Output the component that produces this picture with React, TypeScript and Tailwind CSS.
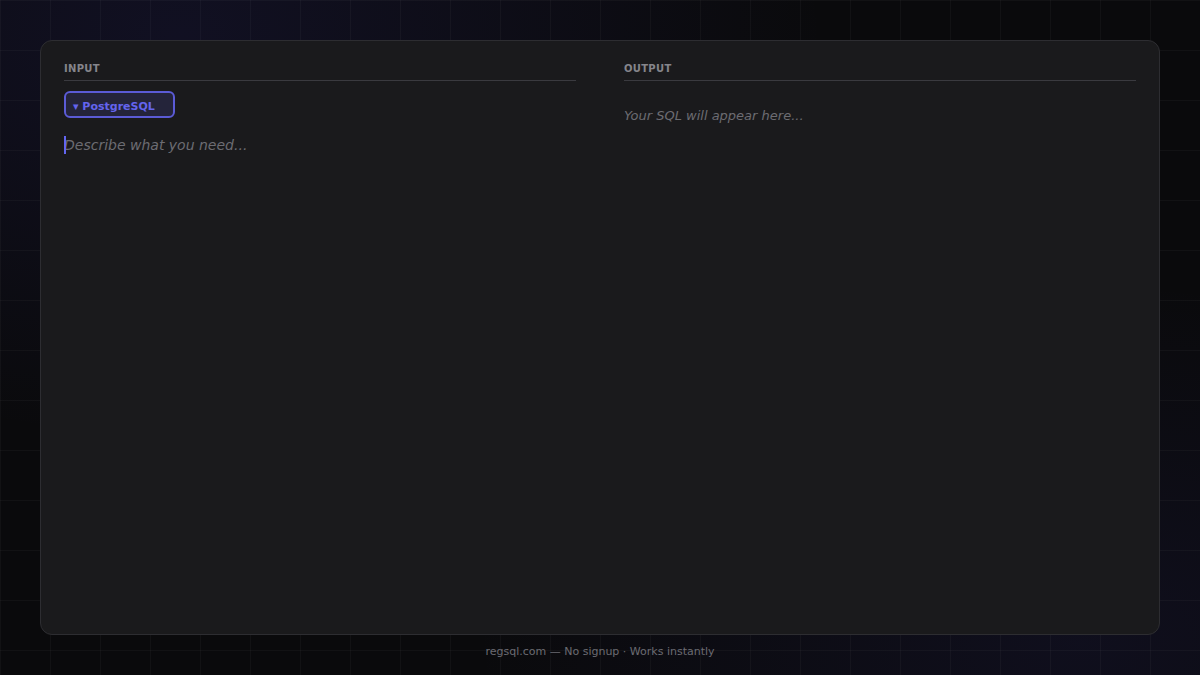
import { useState } from 'react';

const font = 'font-["DejaVu_Sans",sans-serif]';

export default function App() {
  const [prompt, setPrompt] = useState('');
  const [dialect] = useState('PostgreSQL');

  return (
    <div
      className={`${font} flex h-[675px] w-full flex-col bg-[#0a0a0c] bg-[linear-gradient(rgba(255,255,255,0.03)_1px,transparent_1px),linear-gradient(90deg,rgba(255,255,255,0.03)_1px,transparent_1px),radial-gradient(ellipse_at_15%_5%,rgba(79,70,229,0.1),transparent_45%),radial-gradient(ellipse_at_90%_95%,rgba(79,70,229,0.08),transparent_40%)] bg-[size:50px_50px,50px_50px,100%_100%,100%_100%] px-10 pt-10`}
    >
      <div className="grid h-[595px] grid-cols-2 gap-12 rounded-[12px] border border-[#2d2d31] bg-[#1a1a1c] px-[23px] pt-[21px]">
        {/* input column */}
        <div className="flex flex-col">
          <div className="border-b border-[#3a3a3f] pb-[5px] text-[10px] font-bold leading-[13px] tracking-[0.03em] text-[#85858b]">
            INPUT
          </div>
          <button className="mt-[10px] flex h-[27px] w-[111px] items-center rounded-[6px] border-2 border-[#5b5bd6] bg-[#24243a] pl-[7px] pt-[5px] text-left text-[11px] font-bold text-[#6464ee]">
            ▾ {dialect}
          </button>
          <div className="relative mt-[18px] flex-1">
            <span className="absolute left-0 top-0 h-[18px] w-[2px] bg-[#6366f1]" />
            <textarea
              value={prompt}
              onChange={(e) => setPrompt(e.target.value)}
              placeholder="Describe what you need..."
              className="h-full w-full resize-none bg-transparent text-[14px] leading-[18px] text-[#d4d4d8] outline-none placeholder:italic placeholder:text-[#6c6c72]"
            />
          </div>
        </div>

        {/* output column */}
        <div className="flex flex-col">
          <div className="border-b border-[#3a3a3f] pb-[5px] text-[10px] font-bold leading-[13px] tracking-[0.03em] text-[#85858b]">
            OUTPUT
          </div>
          <pre className={`${font} mt-[26px] text-[13px] italic leading-[18px] text-[#6c6c72]`}>
            Your SQL will appear here...
          </pre>
        </div>
      </div>

      <div className="flex flex-1 items-center justify-center pb-[6px] text-[11px] text-[#6b6b72]">
        regsql.com — No signup · Works instantly
      </div>
    </div>
  );
}
